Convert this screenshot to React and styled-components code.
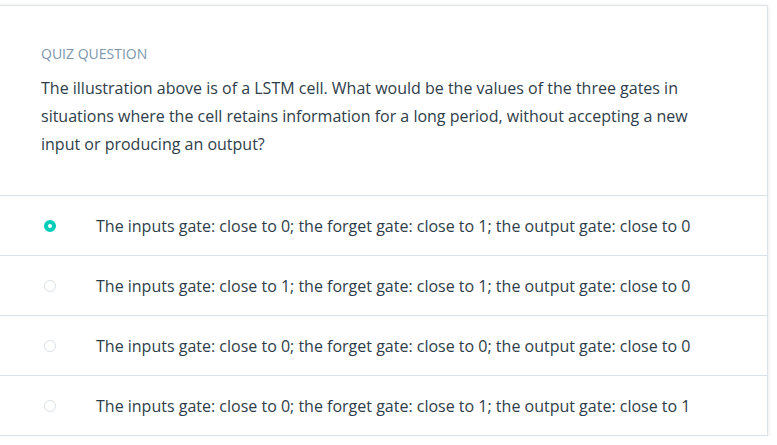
import React, { useState } from "react";
import styled, { createGlobalStyle } from "styled-components";

const GlobalStyle = createGlobalStyle`
  html, body {
    margin: 0;
    padding: 0;
    background: #ffffff;
  }
  body {
    font-family: "Open Sans", "Noto Sans", sans-serif;
    color: #2e3d49;
    -webkit-font-smoothing: antialiased;
  }
`;

const Page = styled.div`
  padding-top: 5px;
  overflow: hidden;
`;

const Card = styled.div`
  margin-left: -10px;
  width: 778px;
  box-sizing: border-box;
  background: #fff;
  border: 1px solid #dbe2e8;
  box-shadow: 0 1px 4px rgba(46, 61, 73, 0.12);
`;

const Header = styled.div`
  padding: 38px 50px 37px 50px;
  border-bottom: 1px solid #dbe2e8;
`;

const Label = styled.div`
  font-size: 14px;
  line-height: 20px;
  text-transform: uppercase;
  color: #7d97ad;
  margin-bottom: 10px;
`;

const Question = styled.p`
  margin: 0;
  font-size: 16px;
  line-height: 28px;
  color: #2e3d49;
  max-width: 670px;
`;

const Options = styled.ul`
  list-style: none;
  margin: 0;
  padding: 0;
`;

const Option = styled.li`
  display: flex;
  align-items: center;
  height: 59px;
  padding-left: 53px;
  border-top: 1px solid #dbe2e8;
  cursor: pointer;
  &:first-child {
    border-top: none;
  }
`;

const Radio = styled.span`
  width: 12px;
  height: 12px;
  box-sizing: border-box;
  border-radius: 50%;
  flex-shrink: 0;
  border: ${(p) => (p.$checked ? "4px solid #02ccba" : "1px solid #dbe2e8")};
  background: #fff;
`;

const OptionText = styled.span`
  margin-left: 40px;
  font-size: 16px;
  line-height: 24px;
  color: #2e3d49;
`;

const answers = [
  "The inputs gate: close to 0; the forget gate: close to 1; the output gate: close to 0",
  "The inputs gate: close to 1; the forget gate: close to 1; the output gate: close to 0",
  "The inputs gate: close to 0; the forget gate: close to 0; the output gate: close to 0",
  "The inputs gate: close to 0; the forget gate: close to 1; the output gate: close to 1",
];

export default function App() {
  const [selected, setSelected] = useState(0);

  return (
    <>
      <GlobalStyle />
      <Page>
        <Card>
          <Header>
            <Label>Quiz Question</Label>
            <Question>
              The illustration above is of a LSTM cell. What would be the values
              of the three gates in situations where the cell retains information
              for a long period, without accepting a new input or producing an
              output?
            </Question>
          </Header>
          <Options>
            {answers.map((text, i) => (
              <Option key={i} onClick={() => setSelected(i)}>
                <Radio $checked={selected === i} />
                <OptionText>{text}</OptionText>
              </Option>
            ))}
          </Options>
        </Card>
      </Page>
    </>
  );
}
